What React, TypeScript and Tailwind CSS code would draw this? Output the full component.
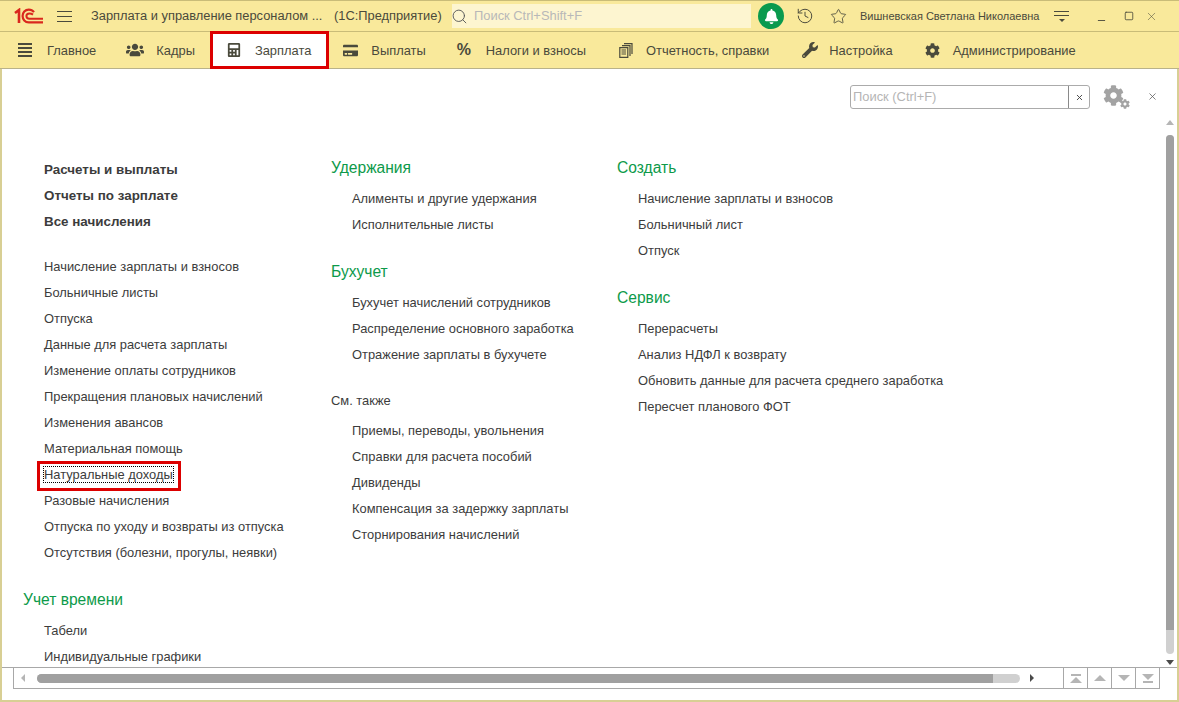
import { FaBell, FaCalculator, FaCog, FaCreditCard, FaUsers, FaWrench } from "react-icons/fa"
import { History, Minus, Search, Square, Star, X } from "lucide-react"

const menu = [
  { label: "Главное", icon: <MenuBars /> },
  { label: "Кадры", icon: <FaUsers className="-ml-[1px] w-[18px] h-[18px] text-[#4a4a3c]" /> },
  { label: "Зарплата", icon: <FaCalculator className="ml-[1px] w-[14px] h-[14px] text-[#4a4a3c]" />, active: true },
  { label: "Выплаты", icon: <FaCreditCard className="ml-[1px] w-[15px] h-[15px] text-[#4a4a3c]" /> },
  { label: "Налоги и взносы", icon: <span className="text-[16px] font-bold leading-none text-[#4a4a3c]">%</span> },
  { label: "Отчетность, справки", icon: <ReportIcon /> },
  { label: "Настройка", icon: <FaWrench className="ml-[2px] w-[16px] h-[16px] text-[#4a4a3c]" /> },
  { label: "Администрирование", icon: <FaCog className="ml-[1px] w-[15px] h-[15px] text-[#4a4a3c]" /> },
]

function MenuBars() {
  return (
    <div className="flex flex-col gap-[2px] w-[14px]">
      <div className="h-[2px] bg-[#4a4a3c]" />
      <div className="h-[2px] bg-[#4a4a3c]" />
      <div className="h-[2px] bg-[#4a4a3c]" />
      <div className="h-[2px] bg-[#4a4a3c]" />
    </div>
  )
}

function ReportIcon() {
  return (
    <svg className="ml-[2px]" width="14" height="15" viewBox="0 0 14 15" fill="none" stroke="#4a4a3c" strokeWidth="1.2">
      <path d="M5 .6h8v10.5M3 2.6h8v10.5M.8 4.6h8v9.8h-8z" fill="#f9e99b" />
      <path d="M2.5 7h4.5M2.5 9h4.5M2.5 11h4.5" />
    </svg>
  )
}

function Logo() {
  return (
    <svg width="30" height="16" viewBox="0 0 30 16" fill="none" stroke="#d9281e">
      <path d="M1 5l4-3v13" strokeWidth="2.6" />
      <path d="M20 4.2C18.8 2.6 17 1.6 14.8 1.6 11 1.6 8.6 4.6 8.6 8s2.4 6.4 6.2 6.4H29" strokeWidth="2.2" />
      <path d="M19 6.6c-1-.8-2.2-1.2-3.6-1.2-1.8 0-3 1.2-3 2.7s1.2 2.7 3 2.7H29" strokeWidth="2" />
    </svg>
  )
}

function Gears() {
  return (
    <div className="relative w-[27px] h-[24px] text-[#a3a3a3]">
      <FaCog className="w-[21px] h-[21px]" />
      <FaCog className="absolute right-0 bottom-0 w-[10px] h-[10px]" />
    </div>
  )
}

function Heading({ children }: { children: string }) {
  return <div className="h-[26px] leading-[26px] mb-[5px] text-[15.6px] text-[#0d9a4a]">{children}</div>
}

function Item({ children }: { children: string }) {
  return <div className="h-[26px] leading-[26px] pl-[21px] whitespace-nowrap">{children}</div>
}

function Group({ title, items, className }: { title: string; items: string[]; className?: string }) {
  return (
    <div className={className}>
      <Heading>{title}</Heading>
      {items.map((item) => (
        <Item key={item}>{item}</Item>
      ))}
    </div>
  )
}

function Arrow({ dir }: { dir: "up" | "down" | "left" | "right" }) {
  if (dir === "up") return <div className="border-x-[4px] border-x-transparent border-b-[5px] border-b-[#b5b5b5]" />
  if (dir === "down") return <div className="border-x-[4px] border-x-transparent border-t-[5px] border-t-[#4a4a4a]" />
  if (dir === "left") return <div className="border-y-[4px] border-y-transparent border-r-[4px] border-r-[#b5b5b5]" />
  return <div className="border-y-[4px] border-y-transparent border-l-[4px] border-l-[#4a4a4a]" />
}

function PageButton({ kind }: { kind: "first" | "up" | "down" | "last" }) {
  return (
    <div className="w-[24px] h-full border-l border-[#a8a8a8] flex flex-col items-center justify-center gap-[1px]">
      {kind === "first" && <div className="w-[10px] h-[2px] bg-[#b5b5b5]" />}
      {(kind === "first" || kind === "up") && (
        <div className="border-x-[6px] border-x-transparent border-b-[6px] border-b-[#b5b5b5]" />
      )}
      {(kind === "down" || kind === "last") && (
        <div className="border-x-[6px] border-x-transparent border-t-[6px] border-t-[#b5b5b5]" />
      )}
      {kind === "last" && <div className="w-[10px] h-[2px] bg-[#b5b5b5]" />}
    </div>
  )
}

export default function App() {
  return (
    <div className="w-[1179px] h-[702px] overflow-hidden flex flex-col bg-white text-[12.9px] text-[#3c3c3c] font-['Liberation_Sans',Arial,sans-serif]">
      {/* Title bar */}
      <div className="h-[32px] shrink-0 flex items-center bg-[#f9e99b] border-b border-t border-[#c9bc78] text-[#4a4a3c]">
        <div className="ml-[14px] w-[43px] shrink-0">
          <Logo />
        </div>
        <div className="w-[34px] shrink-0 flex flex-col gap-[4px]">
          <div className="w-[15px] h-px bg-[#4a4a3c]" />
          <div className="w-[15px] h-px bg-[#4a4a3c]" />
          <div className="w-[15px] h-px bg-[#4a4a3c]" />
        </div>
        <div className="w-[361px] shrink-0 whitespace-nowrap text-[12.85px]">
          Зарплата и управление персоналом ... <span className="ml-[8px]">(1С:Предприятие)</span>
        </div>
        <div className="w-[299px] h-[24px] shrink-0 flex items-center bg-[#fdf5d0] text-[#b8b8b8]">
          <Search className="w-[17px] h-[17px] ml-[-1px] mr-[6px] text-[#555]" strokeWidth={1.3} />
          Поиск Ctrl+Shift+F
        </div>
        <div className="ml-[7px] w-[26px] h-[26px] shrink-0 rounded-full bg-[#0a9a4e] flex items-center justify-center">
          <FaBell className="w-[15px] h-[15px] text-white" />
        </div>
        <History className="ml-[12px] w-[18px] h-[18px] shrink-0" strokeWidth={1.3} />
        <Star className="ml-[16px] w-[17px] h-[17px] shrink-0" strokeWidth={1.2} />
        <div className="ml-[13px] w-[194px] shrink-0 text-[11px] whitespace-nowrap">Вишневская Светлана Николаевна</div>
        <div className="w-[15px] shrink-0 flex flex-col items-center gap-[3px]">
          <div className="w-[15px] h-px bg-[#4a4a3c]" />
          <div className="w-[15px] h-px bg-[#4a4a3c]" />
          <div className="border-x-[3px] border-x-transparent border-t-[3px] border-t-[#4a4a3c]" />
        </div>
        <Minus className="ml-[27px] mt-[8px] w-[11px] h-[11px] shrink-0" strokeWidth={2} />
        <Square className="ml-[17px] w-[10px] h-[10px] shrink-0" strokeWidth={2} />
        <X className="ml-[11px] w-[13px] h-[13px] shrink-0" strokeWidth={1} />
      </div>

      {/* Sections */}
      <div className="h-[37px] shrink-0 flex bg-[#f9e99b] border-b border-[#b9b28a]">
        {menu.map((m) => (
          <div
            key={m.label}
            className="relative h-full flex items-center pl-[18px] pr-[13px] whitespace-nowrap text-[#4a4a3c]"
          >
            {m.active && (
              <div className="absolute left-[2px] -right-[5px] -top-[1px] -bottom-[1px] bg-white border-[3px] border-[#dc0000]" />
            )}
            <div className="relative w-[29px] shrink-0 flex items-center">{m.icon}</div>
            <span className="relative pt-[1px]">{m.label}</span>
          </div>
        ))}
      </div>

      {/* Page */}
      <div className="flex-1 min-h-0 flex flex-col border-x-2 border-x-[#d8cf94] border-b-2 border-b-[#d8cf94]">
        <div className="h-[49px] shrink-0 flex items-start justify-end pt-[16px] pr-[19px]">
          <div className="w-[240px] h-[24px] flex border border-[#ababab] rounded-[3px] text-[#b5b5b5]">
            <div className="flex-1 leading-[22px] pl-[2px]">Поиск (Ctrl+F)</div>
            <div className="w-[21px] border-l border-[#8a8a8a] flex items-center justify-center">
              <X className="w-[9px] h-[9px] text-[#444]" strokeWidth={2.5} />
            </div>
          </div>
          <div className="ml-[13px] mr-[17px] h-[24px]">
            <Gears />
          </div>
          <X className="mt-[6px] w-[11px] h-[11px] text-[#555]" strokeWidth={1.6} />
        </div>

        <div className="flex-1 min-h-0 flex">
          <div className="flex-1 min-w-0 overflow-hidden pt-[37px] flex">
            {/* first column */}
            <div className="w-[329px] shrink-0 pl-[21px]">
              <div className="pt-[2px] font-bold text-[13.4px]">
                <Item>Расчеты и выплаты</Item>
                <Item>Отчеты по зарплате</Item>
                <Item>Все начисления</Item>
              </div>
              <div className="mt-[19px]">
                <Item>Начисление зарплаты и взносов</Item>
                <Item>Больничные листы</Item>
                <Item>Отпуска</Item>
                <Item>Данные для расчета зарплаты</Item>
                <Item>Изменение оплаты сотрудников</Item>
                <Item>Прекращения плановых начислений</Item>
                <Item>Изменения авансов</Item>
                <Item>Материальная помощь</Item>
                <div className="relative h-[26px] leading-[26px] pl-[21px] whitespace-nowrap">
                  <span className="outline-1 outline-dotted outline-black">Натуральные доходы</span>
                  <div className="absolute left-[14px] top-[-1px] w-[144px] h-[30px] border-[3px] border-[#dc0000]" />
                </div>
                <Item>Разовые начисления</Item>
                <Item>Отпуска по уходу и возвраты из отпуска</Item>
                <Item>Отсутствия (болезни, прогулы, неявки)</Item>
              </div>
              <Group className="mt-[21px]" title="Учет времени" items={["Табели", "Индивидуальные графики"]} />
            </div>

            {/* second column */}
            <div className="w-[286px] shrink-0">
              <Group title="Удержания" items={["Алименты и другие удержания", "Исполнительные листы"]} />
              <Group
                className="mt-[21px]"
                title="Бухучет"
                items={["Бухучет начислений сотрудников", "Распределение основного заработка", "Отражение зарплаты в бухучете"]}
              />
              <div className="mt-[20px] h-[26px] leading-[26px] mb-[4px]">См. также</div>
              <Item>Приемы, переводы, увольнения</Item>
              <Item>Справки для расчета пособий</Item>
              <Item>Дивиденды</Item>
              <Item>Компенсация за задержку зарплаты</Item>
              <Item>Сторнирования начислений</Item>
            </div>

            {/* third column */}
            <div>
              <Group title="Создать" items={["Начисление зарплаты и взносов", "Больничный лист", "Отпуск"]} />
              <Group
                className="mt-[21px]"
                title="Сервис"
                items={[
                  "Перерасчеты",
                  "Анализ НДФЛ к возврату",
                  "Обновить данные для расчета среднего заработка",
                  "Пересчет планового ФОТ",
                ]}
              />
            </div>
          </div>

          {/* vertical scrollbar */}
          <div className="w-[12px] shrink-0 mr-[1px] flex flex-col items-center pt-[2px] pb-[2px]">
            <Arrow dir="up" />
            <div className="mt-[10px] w-[8px] flex-1 flex flex-col rounded-full overflow-hidden bg-[#d0d0d0]">
              <div className="h-[495px] bg-[#a0a0a0]" />
            </div>
            <div className="mt-[6px]">
              <Arrow dir="down" />
            </div>
          </div>
        </div>

        {/* horizontal scrollbar and page buttons */}
        <div className="h-[33px] shrink-0 border-t border-[#a8a8a8]">
          <div className="ml-[11px] mr-[17px] h-[21px] flex items-center border-l border-b border-[#a8a8a8]">
            <div className="ml-[7px]">
              <Arrow dir="left" />
            </div>
            <div className="ml-[12px] w-[983px] h-[9px] rounded-full overflow-hidden bg-[#d0d0d0]">
              <div className="h-full w-[956px] bg-[#a0a0a0]" />
            </div>
            <div className="ml-[10px]">
              <Arrow dir="right" />
            </div>
            <div className="ml-auto h-full flex border-r border-[#a8a8a8]">
              <PageButton kind="first" />
              <PageButton kind="up" />
              <PageButton kind="down" />
              <PageButton kind="last" />
            </div>
          </div>
        </div>
      </div>
    </div>
  )
}
